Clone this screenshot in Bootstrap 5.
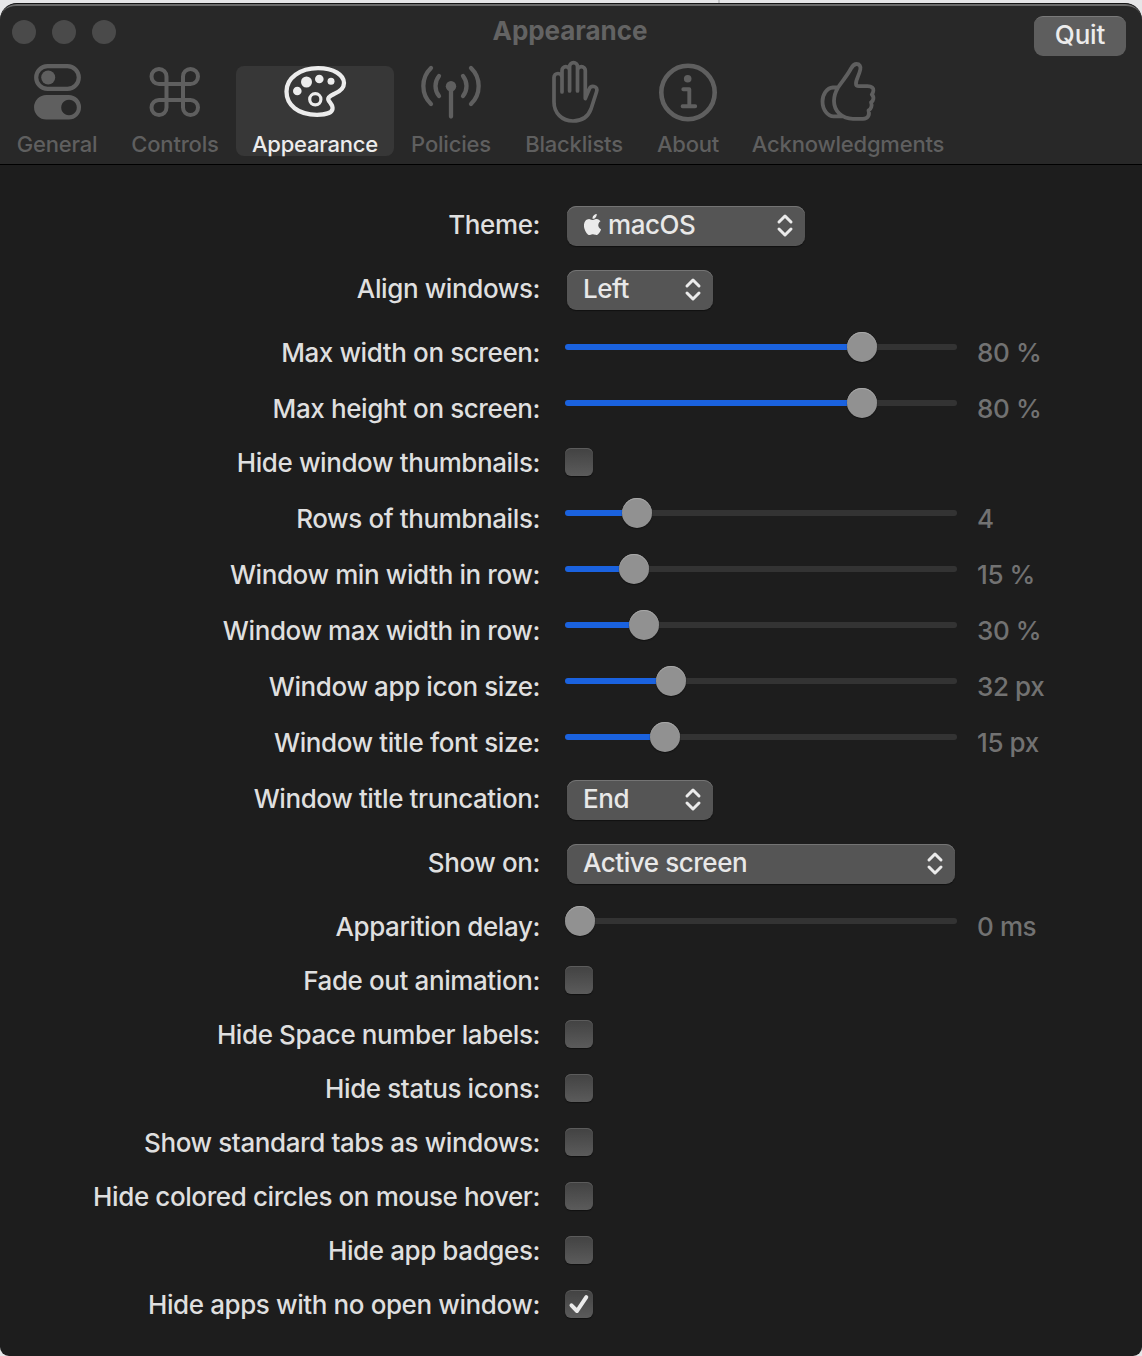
<!DOCTYPE html>
<html lang="en" data-bs-theme="dark">
<head>
<meta charset="utf-8">
<meta name="viewport" content="width=device-width, initial-scale=1">
<title>Appearance</title>
<link href="https://cdn.jsdelivr.net/npm/bootstrap@5.3.0/dist/css/bootstrap.min.css" rel="stylesheet">
<style>
body{margin:0;background:#e6e6e8;font-family:Inter,"Liberation Sans",sans-serif;font-size:26px;font-weight:450;line-height:40px;color:#dfdfdf;overflow:hidden}
.backdrop{height:3px;background:linear-gradient(90deg,transparent 718px,#c4c4c6 718px,#c4c4c6 720px,transparent 720px)}
.app-window{height:1353px;background:#1d1d1d;border-top:1px solid #141414;border-radius:17px 17px 9px 9px;overflow:hidden}
.toolbar{height:161px;background:#282828;border-top:2px solid #6b6b6b;border-bottom:1px solid #000;border-radius:16px 16px 0 0}
.titlebar{height:60px}
.lights{width:300px;padding-left:12px;gap:16px;height:52px}
.lights i{width:24px;height:24px;border-radius:50%;background:#4a4a4a}
.win-title{font-size:26px;font-weight:700;color:#636363;height:50px;line-height:50px;letter-spacing:-.05px;padding-right:2px}
.quit{width:92px;height:40px;margin:10px 16px 0 0;border:0;border-top:1px solid #7a7a7a;border-radius:9px;background:#5e5e5e;color:#ececec;font-size:26px;font-weight:500;line-height:35px;padding:0 0 4px;letter-spacing:-.2px}
.side{width:300px}
.tab-item{height:90px;color:#5f5f5f;font-size:22px;font-weight:500;line-height:26px;letter-spacing:-.2px;border-radius:8px;padding:0}
.tab-item.active{background:#373737;color:#ececec}
.tab-item svg{display:block;margin:-6px auto 7px;width:64px;height:64px;overflow:visible;fill:none;stroke:currentColor;stroke-linecap:round;stroke-linejoin:round}
.tab-item .solid{fill:currentColor;stroke:none}
.prefs{padding-top:40px}
.pref{height:40px;margin-bottom:16px}
.pref.has-select{margin-bottom:24px}
.pref.has-check{margin-top:-2px}
.pref-label{width:540px;margin-right:25px;text-align:right;white-space:nowrap;letter-spacing:-.4px}
.picker{height:40px;margin:1px 0 0 2px;padding:0 10px 0 16px;border-radius:9px;background:#555;box-shadow:inset 0 1px #747474,0 1px 1px #111;color:#e8e8e8;line-height:38px;letter-spacing:-.45px}
.picker .caret{width:20px;height:40px;margin-top:-1px;fill:none;stroke:#ebebeb;stroke-width:3;stroke-linecap:round;stroke-linejoin:round}
.picker .apple{width:21px;height:21px;margin:8px 5px 0 -1px;fill:#ebebeb}
.w-s{width:146px}.w-m{width:238px}.w-l{width:388px}
.pref .form-range{width:392px;height:30px;margin:-12px 0 0;padding:0;flex:none}
.form-range::-webkit-slider-runnable-track{height:6px;border-radius:3px;background:linear-gradient(90deg,#1a62df var(--fill),#333 var(--fill))}
.form-range::-webkit-slider-thumb{width:30px;height:30px;margin-top:-12px;background:#919191;border:0;box-shadow:inset 0 1px #a8a8a8,0 1px 1px #111}
.amount{margin-left:20px;color:#727272;letter-spacing:-.4px}
.pref .form-check-input{width:28px;height:28px;margin:-2px 0 0;border:0;border-radius:6px;background:linear-gradient(#424242,#5b5b5b);box-shadow:inset 0 1px #5c5c5c,0 1px 1px #111}
.pref .form-check-input:checked{background:url("data:image/svg+xml,%3Csvg xmlns='http://www.w3.org/2000/svg' viewBox='0 0 28 28'%3E%3Cpath d='M6.5 15.3L12 21 21.3 7.2' fill='none' stroke='%23ebebeb' stroke-width='4' stroke-linecap='round' stroke-linejoin='round'/%3E%3C/svg%3E"),linear-gradient(#424242,#5b5b5b)}
</style>
<script src="https://cdn.jsdelivr.net/npm/bootstrap@5.3.0/dist/js/bootstrap.bundle.min.js"></script>
</head>
<body>
<svg class="d-none"><symbol id="updown" viewBox="0 0 20 40"><path d="M4 17l6-6 6 6M4 24l6 6 6-6"/></symbol></svg>
<div class="backdrop"></div>
<div class="app-window">
<header class="toolbar">
  <div class="titlebar d-flex justify-content-between">
    <div class="lights d-flex align-items-center"><i></i><i></i><i></i></div>
    <div class="win-title">Appearance</div>
    <div class="side d-flex justify-content-end"><button class="quit">Quit</button></div>
  </div>
  <nav class="d-flex text-center">
    <div class="tab-item" style="width:114px"><svg viewBox="25 60 64 64"><rect x="36.2" y="66.2" width="42.6" height="22.6" rx="11.3" stroke-width="4.2"/><circle class="solid" cx="48.2" cy="77.5" r="7"/><path class="solid" fill-rule="evenodd" d="M46.3 95h22.5a12.2 12.2 0 0 1 0 24.5H46.3a12.2 12.2 0 0 1 0-24.5zM69 99.7a7.800 7.800 0 1 0 .01 0z"/></svg>General</div>
    <div class="tab-item" style="width:122px"><svg viewBox="143 60 64 64" stroke-width="4"><path d="M166.500 84H159a7.500 7.500 0 1 1 7.500-7.500V107.500a7.500 7.500 0 1 1-7.500-7.500H190.500a7.500 7.500 0 1 1-7.500 7.500V76.500a7.500 7.500 0 1 1 7.500 7.500z"/></svg>Controls</div>
    <div class="tab-item active" style="width:158px"><svg viewBox="283 60 64 64" stroke-width="4.300"><path d="M318 68.200C334 68.200 344 75 344 83C344 89 339 92 334 94C329 96.500 327 98 329 101C331 104 333 105.500 332.500 109C332 113 325 114.800 317 114.800C298 114.800 286.500 105 286.500 91.500C286.500 78 300 68.200 318 68.200Z"/><circle cx="315.300" cy="99.300" r="5.600" stroke-width="3.200"/><g class="solid"><circle cx="297.300" cy="91" r="4.300"/><circle cx="306.500" cy="82" r="5.500"/><circle cx="319.300" cy="79" r="4.300"/><circle cx="331" cy="81.300" r="3.500"/></g></svg>Appearance</div>
    <div class="tab-item" style="width:114px"><svg viewBox="419 60 64 64" stroke-width="4.300"><path d="M431 68A25 25 0 0 0 431 104M471 68A25 25 0 0 1 471 104M439 76A16 16 0 0 0 439 96M463 76A16 16 0 0 1 463 96M451 88V116.500"/><circle class="solid" cx="451" cy="86.300" r="5.200"/></svg>Policies</div>
    <div class="tab-item" style="width:132px"><svg viewBox="542 60 64 64" stroke-width="3.700"><path d="M562 92V77.500a4 4 0 0 0-8 0V102c0 11 8 19 19 19 9 0 15-4 18-12l5.500-17c1-3 0-5-2.500-5.500s-3.500 0-4.500 2L585.300 98.500V70.500a3.900 3.900 0 0 0-7.800 0V91M562 80V70.500a3.800 3.800 0 0 1 7.600 0V91M569.600 72V66.500a3.900 3.900 0 0 1 7.900 0V74"/></svg>Blacklists</div>
    <div class="tab-item" style="width:96px"><svg viewBox="656 60 64 64"><circle cx="688" cy="92.500" r="26.700" stroke-width="4.600"/><circle class="solid" cx="687.700" cy="78.700" r="3.800"/><path d="M683.300 89.200h6v17M682.600 106.200h12.600" stroke-width="3.900"/></svg>About</div>
    <div class="tab-item" style="width:224px"><svg viewBox="816 60 64 64" stroke-width="3.800"><path d="M838 87.500C843 80 847 76 851 68.500C853 65 854.500 64 856.500 64C859.500 64 861 66.500 860.300 69.500C859 76 855.500 80 856 84C856 86 857 86.200 859 86.200H867.500C872 86.200 873.600 88 873.400 90.500C873.300 92.500 872.500 93.500 871.800 94.500C874.500 97 873.500 101 871 102.500C872.500 105.500 871 109 868.500 110.500C870 115 868 118.500 863 118.800H853C842 118.800 834 111 834 101C834 95 836 91 838 87.500ZM837.500 87.500H833C826.500 88 822.500 94.500 822.500 101.500C822.500 110 828 116.300 833.500 116.300H843"/></svg>Acknowledgments</div>
  </nav>
</header>
<main class="prefs">
  <div class="pref has-select d-flex"><label class="pref-label">Theme:</label><div class="picker w-m d-flex"><svg class="apple" viewBox="0 0 16 16"><path d="M11.182.008C11.148-.03 9.923.023 8.857 1.180c-1.066 1.156-.902 2.482-.878 2.516s1.520.087 2.475-1.258.762-2.391.728-2.430m3.314 11.733c-.048-.096-2.325-1.234-2.113-3.422s1.675-2.789 1.698-2.854-.597-.790-1.254-1.157a3.700 3.700 0 0 0-1.563-.434c-.108-.003-.483-.095-1.254.116-.508.139-1.653.589-1.968.607-.316.018-1.256-.522-2.267-.665-.647-.125-1.333.131-1.824.328-.490.196-1.422.754-2.074 2.237-.652 1.482-.311 3.830-.067 4.560s.625 1.924 1.273 2.796c.576.984 1.340 1.667 1.659 1.899s1.219.386 1.843.067c.502-.308 1.408-.485 1.766-.472.357.013 1.061.154 1.782.539.571.197 1.111.115 1.652-.105.541-.221 1.324-1.059 2.238-2.758q.520-1.185.473-1.282"/></svg><span class="me-auto">macOS</span><svg class="caret"><use href="#updown"/></svg></div></div>
  <div class="pref has-select d-flex"><label class="pref-label">Align windows:</label><div class="picker w-s d-flex"><span class="me-auto">Left</span><svg class="caret"><use href="#updown"/></svg></div></div>
  <div class="pref d-flex align-items-center"><label class="pref-label">Max width on screen:</label><input type="range" class="form-range" step="any" value="77.9" style="--fill:77%"><span class="amount">80 %</span></div>
  <div class="pref d-flex align-items-center"><label class="pref-label">Max height on screen:</label><input type="range" class="form-range" step="any" value="77.9" style="--fill:77%"><span class="amount">80 %</span></div>
  <div class="pref has-check d-flex align-items-center"><label class="pref-label">Hide window thumbnails:</label><input type="checkbox" class="form-check-input"></div>
  <div class="pref d-flex align-items-center"><label class="pref-label">Rows of thumbnails:</label><input type="range" class="form-range" step="any" value="15.75" style="--fill:18%"><span class="amount">4</span></div>
  <div class="pref d-flex align-items-center"><label class="pref-label">Window min width in row:</label><input type="range" class="form-range" step="any" value="14.9" style="--fill:17%"><span class="amount">15 %</span></div>
  <div class="pref d-flex align-items-center"><label class="pref-label">Window max width in row:</label><input type="range" class="form-range" step="any" value="17.7" style="--fill:20%"><span class="amount">30 %</span></div>
  <div class="pref d-flex align-items-center"><label class="pref-label">Window app icon size:</label><input type="range" class="form-range" step="any" value="25.1" style="--fill:27%"><span class="amount">32 px</span></div>
  <div class="pref d-flex align-items-center"><label class="pref-label">Window title font size:</label><input type="range" class="form-range" step="any" value="23.5" style="--fill:25%"><span class="amount">15 px</span></div>
  <div class="pref has-select d-flex"><label class="pref-label">Window title truncation:</label><div class="picker w-s d-flex"><span class="me-auto">End</span><svg class="caret"><use href="#updown"/></svg></div></div>
  <div class="pref has-select d-flex"><label class="pref-label">Show on:</label><div class="picker w-l d-flex"><span class="me-auto">Active screen</span><svg class="caret"><use href="#updown"/></svg></div></div>
  <div class="pref d-flex align-items-center"><label class="pref-label">Apparition delay:</label><input type="range" class="form-range" step="any" value="0" style="--fill:0%"><span class="amount">0 ms</span></div>
  <div class="pref has-check d-flex align-items-center"><label class="pref-label">Fade out animation:</label><input type="checkbox" class="form-check-input"></div>
  <div class="pref has-check d-flex align-items-center"><label class="pref-label">Hide Space number labels:</label><input type="checkbox" class="form-check-input"></div>
  <div class="pref has-check d-flex align-items-center"><label class="pref-label">Hide status icons:</label><input type="checkbox" class="form-check-input"></div>
  <div class="pref has-check d-flex align-items-center"><label class="pref-label">Show standard tabs as windows:</label><input type="checkbox" class="form-check-input"></div>
  <div class="pref has-check d-flex align-items-center"><label class="pref-label">Hide colored circles on mouse hover:</label><input type="checkbox" class="form-check-input"></div>
  <div class="pref has-check d-flex align-items-center"><label class="pref-label">Hide app badges:</label><input type="checkbox" class="form-check-input"></div>
  <div class="pref has-check d-flex align-items-center"><label class="pref-label">Hide apps with no open window:</label><input type="checkbox" class="form-check-input" checked></div>
</main>
</div>
</body>
</html>
